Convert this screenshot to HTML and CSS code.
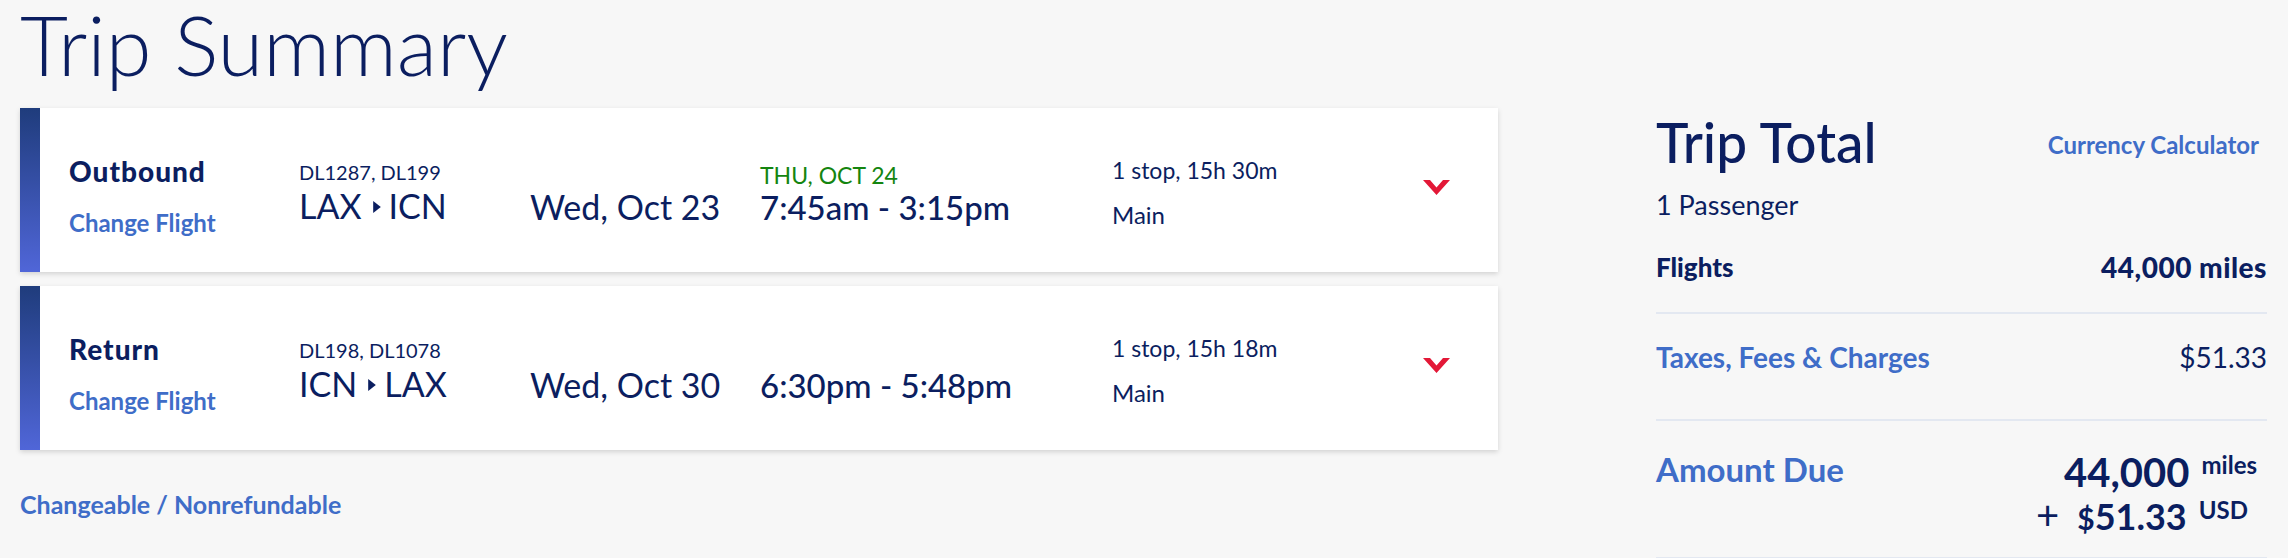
FILE: index.html
```html
<!DOCTYPE html>
<html lang="en">
<head>
	<meta charset="UTF-8">
	<title>Trip Summary</title>
	<link rel="stylesheet" href="styles.css">
</head>
<body>
	<div class="page">
		<div class="main">
			<h1 class="title">Trip Summary</h1>

			<div class="trip">
				<div class="trip-bar"></div>
				<div class="trip-leg">
					<div class="leg-name">Outbound</div>
					<a class="link change">Change Flight</a>
				</div>
				<div class="trip-route">
					<div class="flight-nums">DL1287, DL199</div>
					<div class="airports">LAX<svg class="arrow" viewBox="0 0 7 11"><polygon points="0,0 7,5.5 0,11"/></svg>ICN</div>
				</div>
				<div class="trip-date">Wed, Oct 23</div>
				<div class="trip-time">
					<div class="arrive-day">THU, OCT 24</div>
					<div class="hours">7:45am - 3:15pm</div>
				</div>
				<div class="trip-info">
					<div class="stops">1 stop, 15h 30m</div>
					<div class="cabin">Main</div>
				</div>
				<svg class="toggle" viewBox="0 0 27 15"><polygon points="0,0 7,0 13.5,7.5 20,0 27,0 13.5,15"/></svg>
			</div>

			<div class="trip">
				<div class="trip-bar"></div>
				<div class="trip-leg">
					<div class="leg-name">Return</div>
					<a class="link change">Change Flight</a>
				</div>
				<div class="trip-route">
					<div class="flight-nums">DL198, DL1078</div>
					<div class="airports">ICN<svg class="arrow" viewBox="0 0 7 11"><polygon points="0,0 7,5.5 0,11"/></svg>LAX</div>
				</div>
				<div class="trip-date">Wed, Oct 30</div>
				<div class="trip-time">
					<div class="arrive-day"></div>
					<div class="hours">6:30pm - 5:48pm</div>
				</div>
				<div class="trip-info">
					<div class="stops">1 stop, 15h 18m</div>
					<div class="cabin">Main</div>
				</div>
				<svg class="toggle" viewBox="0 0 27 15"><polygon points="0,0 7,0 13.5,7.5 20,0 27,0 13.5,15"/></svg>
			</div>

			<a class="link policy">Changeable / Nonrefundable</a>
		</div>

		<aside class="summary">
			<div class="summary-head">
				<h2 class="summary-title">Trip Total</h2>
				<a class="link calc">Currency Calculator</a>
			</div>
			<div class="passengers">1 Passenger</div>
			<div class="fare-row flights">
				<span>Flights</span>
				<span class="fare-miles">44,000 miles</span>
			</div>
			<div class="fare-row taxes">
				<a class="link">Taxes, Fees &amp; Charges</a>
				<span>$51.33</span>
			</div>
			<div class="fare-row due">
				<a class="link due-label">Amount Due</a>
				<div class="due-total">
					<div class="due-line">44,000<span class="unit">miles</span></div>
					<div class="due-line cash"><span class="plus">+</span><span class="cur">$</span>51.33<span class="unit">USD</span></div>
				</div>
			</div>
		</aside>
	</div>
</body>
</html>
```

FILE: styles.css
```css
*{
	margin: 0;
	padding: 0;
	box-sizing: border-box;
}
body{
	background-color: #f7f7f7;
	font-family: Lato, "Noto Sans", sans-serif;
	color: #0b1e60;
}
.page{
	display: flex;
	align-items: flex-start;
	padding-left: 20px;
}
.main{
	width: 1478px;
}
.title{
	font-size: 83px;
	line-height: 88px;
	font-weight: 300;
	margin-bottom: 20px;
}
.link{
	color: #3f6dc8;
	font-weight: 700;
	text-decoration: none;
}

/* trip cards */
.trip{
	display: flex;
	align-items: flex-start;
	height: 164px;
	background-color: #fff;
	box-shadow: 0 2px 5px rgba(0,0,0,.15);
}
.trip + .trip{
	margin-top: 14px;
}
.trip-bar{
	width: 20px;
	align-self: stretch;
	background: linear-gradient(#1f3c7c, #5066d8);
}
.trip-leg{
	width: 230px;
	margin-left: 29px;
	margin-top: 48px;
}
.leg-name{
	font-size: 28px;
	line-height: 31px;
	font-weight: 900;
	letter-spacing: 1px;
}
.change{
	display: block;
	margin-top: 21px;
	font-size: 24px;
	line-height: 29px;
}
.trip-route{
	width: 231px;
	margin-top: 52px;
}
.flight-nums{
	font-size: 20px;
	line-height: 24px;
}
.airports{
	margin-top: 3px;
	font-size: 34px;
	line-height: 37px;
}
.arrow{
	width: 8px;
	height: 12px;
	margin: 0 8px 0 11px;
	vertical-align: 6px;
	fill: #0b1e60;
}
.trip-date{
	width: 230px;
	margin-top: 80px;
	font-size: 34px;
	line-height: 37px;
}
.trip-time{
	width: 352px;
	margin-top: 55px;
}
.arrive-day{
	height: 25px;
	font-size: 23px;
	line-height: 25px;
	color: #14850f;
}
.hours{
	font-size: 33px;
	line-height: 38px;
	font-weight: 500;
}
.trip-info{
	width: 311px;
	margin-top: 50px;
}
.stops{
	font-size: 23px;
	line-height: 25px;
}
.cabin{
	margin-top: 19px;
	font-size: 24px;
	line-height: 26px;
}
.toggle{
	width: 27px;
	height: 15px;
	margin-top: 72px;
	fill: #e31837;
}
.policy{
	display: block;
	margin-top: 40px;
	font-size: 25px;
	line-height: 28px;
}

/* trip total */
.summary{
	width: 611px;
	margin-left: 158px;
	padding-top: 112px;
}
.summary-head{
	display: flex;
	justify-content: space-between;
	align-items: flex-start;
}
.summary-title{
	font-size: 55px;
	line-height: 60px;
	font-weight: 500;
}
.calc{
	margin-top: 20px;
	margin-right: 8px;
	font-size: 24px;
	line-height: 26px;
}
.passengers{
	margin-top: 19px;
	font-size: 27px;
	line-height: 28px;
}
.fare-row{
	display: flex;
	justify-content: space-between;
	align-items: flex-start;
	font-size: 28px;
	line-height: 28px;
	border-bottom: 2px solid #e3e8f1;
}
.flights{
	margin-top: 34px;
	padding-bottom: 31px;
	font-size: 26px;
	font-weight: 900;
}
.fare-miles{
	font-size: 28px;
	letter-spacing: .5px;
}
.taxes{
	padding-top: 29px;
	padding-bottom: 48px;
}
.due{
	padding-top: 29px;
	padding-bottom: 16px;
}
.due-label{
	font-size: 33px;
	line-height: 38px;
}
.due-total{
	margin-top: 1px;
	text-align: right;
	font-size: 40px;
	line-height: 43px;
	font-weight: 700;
}
.due-line{
	padding-right: 10px;
}
.due-line.cash{
	padding-right: 19px;
	font-size: 36px;
	line-height: 45px;
}
.unit{
	margin-left: 12px;
	font-size: 24px;
	line-height: 1;
	vertical-align: 13px;
}
.cash .unit{
	vertical-align: 11px;
}
.plus{
	margin-right: 18px;
	font-size: 40px;
	line-height: 1;
	font-weight: 400;
}
.cur{
	font-size: 30px;
}
```
